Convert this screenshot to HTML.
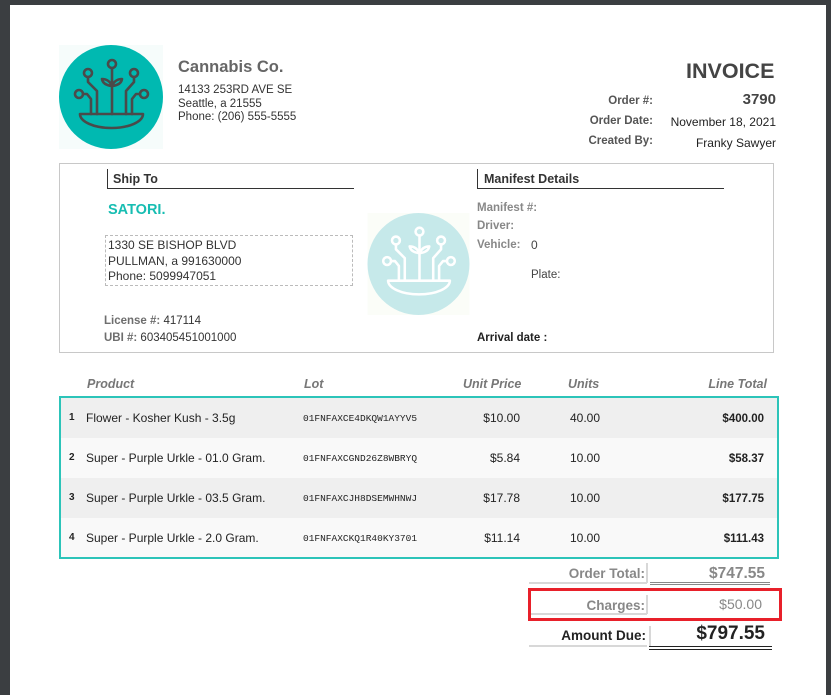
<!DOCTYPE html>
<html><head><meta charset="utf-8"><style>
*{margin:0;padding:0;box-sizing:border-box}
body{width:831px;height:686px;background:#3b3e41;position:relative;overflow:hidden;font-family:"Liberation Sans",Arial,sans-serif;color:#222}
#pg{position:absolute;left:10px;top:5px;width:816px;height:690px;background:#fff}
.a{position:absolute;white-space:nowrap;line-height:1}
.g{color:#6e6e6e}
.b{font-weight:bold}
.r{text-align:right}
.mono{font-family:"Liberation Mono","DejaVu Sans Mono",monospace;font-size:9.5px}
.row{position:absolute;left:60px;width:717px;height:40px}
.hd{font-style:italic;font-weight:bold;color:#777;font-size:12.5px}
</style></head><body>
<div id="pg"></div>

<svg class="a" style="left:59px;top:45px" width="104" height="104" viewBox="0 0 104 104">
<rect width="104" height="104" fill="#f6fcfb"/>
<circle cx="52" cy="52" r="52" fill="#00b9b1"/>
<g fill="none" stroke="#4a4a4a" stroke-width="2.6" stroke-linecap="round" stroke-linejoin="round">
<path d="M21 69 H84 A31.5 14 0 0 1 21 69 Z"/>
<path d="M53 23 V69"/><circle cx="53" cy="19" r="4"/>
<path d="M53 41 Q44 40 43 34 Q50 34 53 41 Q56 34 63 34 Q62 40 53 41"/>
<circle cx="29" cy="28" r="4"/><path d="M29 32 V37 L38 46 V69"/>
<circle cx="75" cy="28" r="4"/><path d="M75 32 V37 L67 46 V69"/>
<circle cx="20" cy="49" r="4"/><path d="M24 49 H28 L32 54 V69"/>
<circle cx="85" cy="49" r="4"/><path d="M81 49 H77 L73 54 V69"/>
</g></svg>

<div class="a b g" style="left:178px;top:59px;font-size:16.5px;color:#666">Cannabis Co.</div>
<div class="a" style="left:178px;top:84px;font-size:11.5px;line-height:13.5px;color:#333">14133 253RD AVE SE<br>Seattle, a 21555<br>Phone: (206) 555-5555</div>

<div class="a b" style="left:686px;top:61px;font-size:21.5px;color:#444">INVOICE</div>
<div class="a b r" style="right:55px;top:92px;font-size:15px;color:#444">3790</div>
<div class="a b r" style="right:178px;top:96px;font-size:11.5px;color:#555">Order #:</div>
<div class="a b r" style="right:178px;top:116px;font-size:11.5px;color:#555">Order Date:</div>
<div class="a b r" style="right:178px;top:136px;font-size:11.5px;color:#555">Created By:</div>
<div class="a r" style="right:55px;top:116px;font-size:12px">November 18, 2021</div>
<div class="a r" style="right:55px;top:137px;font-size:12px">Franky Sawyer</div>

<div class="a" style="left:59px;top:163px;width:715px;height:190px;border:1px solid #c8c8c8"></div>
<div class="a" style="left:107px;top:169px;width:247px;height:20px;border-left:1.5px solid #333;border-bottom:1.5px solid #333"></div>
<div class="a b" style="left:113px;top:173px;font-size:12.5px;color:#333">Ship To</div>
<div class="a b" style="left:108px;top:203px;font-size:14.5px;color:#17bdb2">SATORI.</div>
<div class="a" style="left:105px;top:235px;width:248px;height:51px;border:1px dashed #bbb"></div>
<div class="a" style="left:108px;top:238px;font-size:12px;line-height:15.5px;color:#333">1330 SE BISHOP BLVD<br>PULLMAN, a 991630000<br>Phone: 5099947051</div>
<div class="a" style="left:104px;top:316px;font-size:11.5px;color:#333"><span class="b g">License #:</span> 417114</div>
<div class="a" style="left:104px;top:333px;font-size:11.5px;color:#333"><span class="b g">UBI #:</span> 603405451001000</div>

<svg class="a" style="left:366px;top:213px" width="105" height="102" viewBox="0 0 104 104">
<rect width="104" height="104" fill="#fbfdf8"/>
<circle cx="52" cy="52" r="52" fill="#c6e9ea"/>
<g fill="none" stroke="#fff" stroke-width="2.6" stroke-linecap="round" stroke-linejoin="round">
<path d="M21 69 H84 A31.5 14 0 0 1 21 69 Z"/>
<path d="M53 23 V69"/><circle cx="53" cy="19" r="4"/>
<path d="M53 41 Q44 40 43 34 Q50 34 53 41 Q56 34 63 34 Q62 40 53 41"/>
<circle cx="29" cy="28" r="4"/><path d="M29 32 V37 L38 46 V69"/>
<circle cx="75" cy="28" r="4"/><path d="M75 32 V37 L67 46 V69"/>
<circle cx="20" cy="49" r="4"/><path d="M24 49 H28 L32 54 V69"/>
<circle cx="85" cy="49" r="4"/><path d="M81 49 H77 L73 54 V69"/>
</g></svg>

<div class="a" style="left:477px;top:169px;width:247px;height:20px;border-left:1.5px solid #333;border-bottom:1.5px solid #333"></div>
<div class="a b" style="left:484px;top:173px;font-size:12.5px;color:#333">Manifest Details</div>
<div class="a b" style="left:477px;top:203px;font-size:11.5px;color:#888">Manifest #:</div>
<div class="a b" style="left:477px;top:221px;font-size:11.5px;color:#888">Driver:</div>
<div class="a b" style="left:477px;top:240px;font-size:11.5px;color:#888">Vehicle:</div>
<div class="a" style="left:531px;top:239px;font-size:12px;color:#444">0</div>
<div class="a" style="left:531px;top:270px;font-size:11.5px;color:#444">Plate:</div>
<div class="a b" style="left:477px;top:333px;font-size:11.5px;color:#222">Arrival date :</div>

<div class="a hd" style="left:87px;top:378px">Product</div>
<div class="a hd" style="left:304px;top:378px">Lot</div>
<div class="a hd" style="left:463px;top:378px">Unit Price</div>
<div class="a hd" style="left:568px;top:378px">Units</div>
<div class="a hd r" style="right:64px;top:378px">Line Total</div>

<div class="row" style="top:398px;background:#efefef"></div>
<div class="row" style="top:438px;background:#f9f9f9"></div>
<div class="row" style="top:478px;background:#efefef"></div>
<div class="row" style="top:518px;background:#f9f9f9"></div>
<div class="a" style="left:59px;top:396px;width:720px;height:163px;border:2px solid #2cc4b9"></div>

<div class="a b" style="left:69px;top:413px;font-size:10px">1</div>
<div class="a" style="left:86px;top:412px;font-size:12px">Flower - Kosher Kush - 3.5g</div>
<div class="a mono" style="left:303px;top:414px">01FNFAXCE4DKQW1AYYV5</div>
<div class="a r" style="right:311px;top:412px;font-size:12px">$10.00</div>
<div class="a" style="left:570px;top:412px;font-size:12px">40.00</div>
<div class="a b r" style="right:67px;top:414px;font-size:11.5px">$400.00</div>

<div class="a b" style="left:69px;top:453px;font-size:10px">2</div>
<div class="a" style="left:86px;top:452px;font-size:12px">Super - Purple Urkle - 01.0 Gram.</div>
<div class="a mono" style="left:303px;top:454px">01FNFAXCGND26Z8WBRYQ</div>
<div class="a r" style="right:311px;top:452px;font-size:12px">$5.84</div>
<div class="a" style="left:570px;top:452px;font-size:12px">10.00</div>
<div class="a b r" style="right:67px;top:454px;font-size:11.5px">$58.37</div>

<div class="a b" style="left:69px;top:493px;font-size:10px">3</div>
<div class="a" style="left:86px;top:492px;font-size:12px">Super - Purple Urkle - 03.5 Gram.</div>
<div class="a mono" style="left:303px;top:494px">01FNFAXCJH8DSEMWHNWJ</div>
<div class="a r" style="right:311px;top:492px;font-size:12px">$17.78</div>
<div class="a" style="left:570px;top:492px;font-size:12px">10.00</div>
<div class="a b r" style="right:67px;top:494px;font-size:11.5px">$177.75</div>

<div class="a b" style="left:69px;top:533px;font-size:10px">4</div>
<div class="a" style="left:86px;top:532px;font-size:12px">Super - Purple Urkle - 2.0 Gram.</div>
<div class="a mono" style="left:303px;top:534px">01FNFAXCKQ1R40KY3701</div>
<div class="a r" style="right:311px;top:532px;font-size:12px">$11.14</div>
<div class="a" style="left:570px;top:532px;font-size:12px">10.00</div>
<div class="a b r" style="right:67px;top:534px;font-size:11.5px">$111.43</div>

<div class="a" style="left:529px;top:582px;width:118px;border-top:2px solid #d8d8d8"></div>
<div class="a" style="left:646px;top:563px;height:20px;border-left:2px solid #d8d8d8"></div>
<div class="a" style="left:650px;top:582px;width:120px;border-top:3px double #888"></div>
<div class="a b r" style="right:186px;top:567px;font-size:13.5px;color:#888">Order Total:</div>
<div class="a b r" style="right:66px;top:566px;font-size:15.5px;color:#888">$747.55</div>

<div class="a" style="left:529px;top:613px;width:118px;border-top:2px solid #d8d8d8"></div>
<div class="a" style="left:646px;top:595px;height:19px;border-left:2px solid #d8d8d8"></div>
<div class="a b r" style="right:186px;top:599px;font-size:13.5px;color:#888">Charges:</div>
<div class="a r" style="right:69px;top:597px;font-size:14px;color:#888">$50.00</div>
<div class="a" style="left:528px;top:588px;width:254px;height:33px;border:3px solid #e8202a"></div>

<div class="a" style="left:529px;top:645px;width:118px;border-top:2px solid #d8d8d8"></div>
<div class="a" style="left:649px;top:626px;height:20px;border-left:2px solid #d8d8d8"></div>
<div class="a" style="left:649px;top:646px;width:123px;border-top:4px double #222"></div>
<div class="a b r" style="right:185px;top:629px;font-size:13.5px;color:#222">Amount Due:</div>
<div class="a b r" style="right:66px;top:624px;font-size:19px;color:#222">$797.55</div>
</body></html>
